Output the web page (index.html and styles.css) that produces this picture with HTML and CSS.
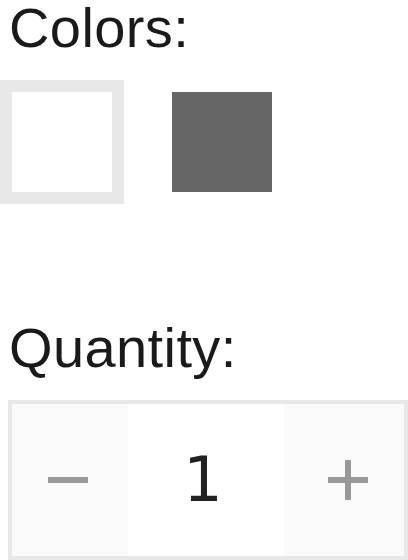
FILE: index.html
```html
<!DOCTYPE html>
<html>
<head>
<meta charset="utf-8">
<link rel="stylesheet" href="styles.css">
</head>
<body>
<div class="page">
  <h2 class="label">Colors:</h2>
  <div class="swatches">
    <div class="swatch swatch-white selected"></div>
    <div class="swatch swatch-gray"></div>
  </div>
  <h2 class="label label-qty">Quantity:</h2>
  <div class="qty">
    <button class="qty-btn qty-minus" aria-label="Decrease">
      <svg width="40" height="40" viewBox="0 0 40 40"><rect x="0" y="17" width="40" height="6" fill="#999"/></svg>
    </button>
    <div class="qty-value">1</div>
    <button class="qty-btn qty-plus" aria-label="Increase">
      <svg width="40" height="40" viewBox="0 0 40 40"><rect x="0" y="17" width="40" height="6" fill="#999"/><rect x="17" y="0" width="6" height="40" fill="#999"/></svg>
    </button>
  </div>
</div>
</body>
</html>
```
FILE: styles.css
```css
html, body {
  margin: 0;
  padding: 0;
  background: #fff;
}
.page {
  width: 408px;
  height: 560px;
  overflow: hidden;
  display: flex;
  flex-direction: column;
  font-family: "Liberation Sans", Arial, sans-serif;
}
.label {
  margin: 0;
  padding-left: 9px;
  font-size: 56px;
  font-weight: 400;
  line-height: 56px;
  letter-spacing: 0.4px;
  color: #1a1a1a;
}
.swatches {
  display: flex;
  gap: 36px;
  margin-top: 24px;
}
.swatch {
  width: 100px;
  height: 100px;
  border: 12px solid transparent;
  background-clip: content-box;
}
.swatch.selected {
  border-color: #e8e8e8;
}
.swatch-white { background-color: #fff; }
.swatch-gray { background-color: #666; }
.label-qty {
  margin-top: 116px;
}
.qty {
  margin: 24px 0 0 8px;
  width: 392px;
  height: 152px;
  border: 4px solid #e8e8e8;
  display: flex;
}
.qty-btn {
  border: 0;
  margin: 0;
  padding: 0;
  background: #fafafa;
  display: flex;
  align-items: center;
  justify-content: center;
}
.qty-minus { width: 116px; padding-right: 4px; }
.qty-plus { width: 120px; padding-left: 8px; }
.qty-value {
  width: 156px;
  background: #fff;
  display: flex;
  align-items: center;
  justify-content: center;
  padding-right: 6px;
  box-sizing: border-box;
  font-family: "DejaVu Sans", sans-serif;
  font-size: 62px;
  color: #222;
  line-height: 1;
}
```
